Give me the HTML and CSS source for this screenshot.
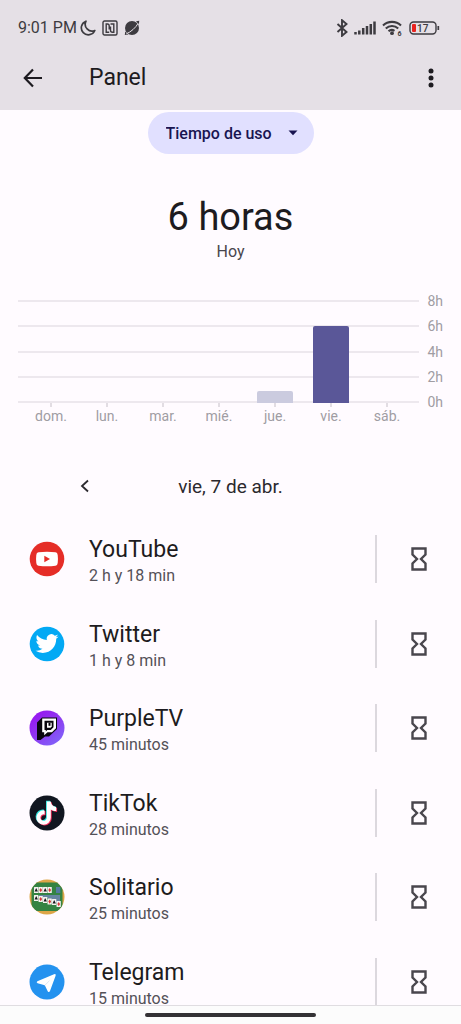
FILE: index.html
```html
<!DOCTYPE html>
<html lang="es">
<head>
<meta charset="utf-8">
<meta name="viewport" content="width=device-width, initial-scale=1">
<title>Panel</title>
<link rel="stylesheet" href="styles.css">
</head>
<body>
<svg class="defs" aria-hidden="true">
  <symbol id="hourglass" viewBox="0 0 16 24">
    <path d="M1.500 1.500h13v6L10 12l4.500 4.500v6h-13v-6L6 12 1.500 7.500z" fill="none" stroke="currentColor" stroke-width="2.400"/>
  </symbol>
</svg>

<header class="top">
  <div class="status">
    <span class="clock">9:01 PM</span>
    <svg class="moon" width="16" height="16" viewBox="0 0 16 16"><path d="M6 1.200A7 7 0 1 0 14.800 10.500 6.800 6.800 0 0 1 6 1.200z" fill="none" stroke="currentColor" stroke-width="1.700" stroke-linejoin="round"/></svg>
    <svg class="nfc" width="16" height="16" viewBox="0 0 16 16"><g fill="none" stroke="currentColor" stroke-width="1.400"><rect x="1" y="1" width="14" height="14" rx="1.500"/><path d="M7.200 12.200H4.200V4h1.300q1.700 0 1.700 2v3.500M8.500 4h3.300v8.200h-1.300q-2 0-2-2V6.500"/></g></svg>
    <svg class="planet" width="16" height="16" viewBox="0 0 16 16"><circle cx="8" cy="8" r="7" fill="currentColor"/><path d="M12 1.200l3.200-.4-.3 3.700zM1.200 11.500L.8 15l3.700-.6z" fill="currentColor"/><path d="M2.300 13.800C6.500 12.300 12 7.500 14 3.500" fill="none" stroke="#e5e0e6" stroke-width="1"/></svg>
    <svg class="bluetooth" width="12" height="18" viewBox="0 0 12 18"><path d="M1.500 5l9 8-4.500 3.800V1.200L10.500 5l-9 8" fill="none" stroke="currentColor" stroke-width="1.900"/></svg>
    <svg class="signal" width="22" height="14" viewBox="0 0 22 14"><path d="M1.500 13.500v-2.500M5.300 13.500V9.500M9.200 13.500V7M13 13.500V5M16.800 13.500V3M20.500 13.500V.5" stroke="currentColor" stroke-width="2.500"/></svg>
    <svg class="wifi" width="21" height="16" viewBox="0 0 21 16"><g fill="none" stroke="currentColor" stroke-width="2.100"><path d="M1 5.500a13 13 0 0 1 18 0M3.800 8.500a9 9 0 0 1 12.400 0M6.500 11.300a5 5 0 0 1 6-.5"/></g><circle cx="10" cy="13.200" r="1.900" fill="currentColor"/><text x="15.500" y="15.500" class="tiny">6</text></svg>
    <svg class="battery" width="31" height="14" viewBox="0 0 31 14"><rect x="1" y="1" width="26" height="12" rx="3.500" fill="none" stroke="currentColor" stroke-width="1.400"/><rect x="3" y="3" width="4" height="8" rx="1" fill="#e9231f"/><path d="M29.300 5v4" stroke="currentColor" stroke-width="1.700"/><text x="8" y="10.700" class="charge">17</text></svg>
  </div>
  <div class="appbar">
    <button class="icon-button" type="button" aria-label="Atrás"><svg width="20" height="20" viewBox="0 0 20 20"><path d="M19 10H2M10 1.500L1.800 10l8.200 8.500" fill="none" stroke="currentColor" stroke-width="2.200"/></svg></button>
    <h1>Panel</h1>
    <button class="icon-button" type="button" aria-label="Más opciones"><svg width="6" height="20" viewBox="0 0 6 20" fill="currentColor"><circle cx="3" cy="3" r="2.500"/><circle cx="3" cy="10" r="2.500"/><circle cx="3" cy="17" r="2.500"/></svg></button>
  </div>
</header>

<main>
  <div class="metric">
    <select aria-label="Métrica"><option>Tiempo de uso</option></select>
    <svg width="10" height="6" viewBox="0 0 10 6"><path d="M.5.500h9L5 5.200z" fill="currentColor"/></svg>
  </div>

  <section class="summary">
    <h2>6 horas</h2>
    <p>Hoy</p>
  </section>

  <section class="chart" aria-label="Uso por día">
    <div class="plot">
      <div class="lines"><i></i><i></i><i></i><i></i><i></i></div>
      <div class="bars">
        <span></span><span></span><span></span><span></span>
        <span><b class="bar" style="height:12%"></b></span>
        <span><b class="bar active" style="height:75%"></b></span>
        <span></span>
      </div>
    </div>
    <div class="scale"><span>8h</span><span>6h</span><span>4h</span><span>2h</span><span>0h</span></div>
    <div class="days"><span>dom.</span><span>lun.</span><span>mar.</span><span>mié.</span><span>jue.</span><span>vie.</span><span>sáb.</span></div>
  </section>

  <nav class="date" aria-label="Día">
    <button class="icon-button" type="button" aria-label="Día anterior"><svg width="10" height="14" viewBox="0 0 10 14"><path d="M8 1.500L2 7l6 5.500" fill="none" stroke="currentColor" stroke-width="1.800"/></svg></button>
    <span>vie, 7 de abr.</span>
  </nav>

  <ul class="apps">
    <li>
      <svg class="logo" viewBox="0 0 36 36"><circle cx="18" cy="18" r="17.300" fill="#e52d27"/><path d="M9.500 11.200Q18 10.200 26.500 11.200 28.500 11.500 28.700 14q.5 4 0 8-.2 2.500-2.200 2.800-8.500 1-17 0-2-.3-2.200-2.800-.5-4 0-8 .2-2.500 2.200-2.800z" fill="#fff"/><path d="M15.300 14.800v6.400l5.700-3.200z" fill="#e52d27"/></svg>
      <div class="info"><h3>YouTube</h3><p>2 h y 18 min</p></div>
      <button class="timer" type="button" aria-label="Temporizador de YouTube"><svg width="16" height="24"><use href="#hourglass"/></svg></button>
    </li>
    <li>
      <svg class="logo" viewBox="0 0 36 36"><circle cx="18" cy="18" r="17.300" fill="#03a9f4"/><g transform="translate(6.500 6) scale(.96)"><path d="M23.950 4.570a10 10 0 0 1-2.820.77 4.960 4.960 0 0 0 2.160-2.720c-.95.55-2 .95-3.130 1.180a4.920 4.920 0 0 0-8.380 4.480C7.690 8.090 4.070 6.130 1.640 3.160a4.820 4.820 0 0 0-.67 2.480c0 1.710.87 3.210 2.190 4.090a4.900 4.900 0 0 1-2.230-.61v.06a4.920 4.920 0 0 0 3.950 4.830 5 5 0 0 1-2.210.08 4.940 4.940 0 0 0 4.600 3.420A9.870 9.870 0 0 1 0 19.540a14 14 0 0 0 7.550 2.210c9.050 0 14-7.500 14-13.980 0-.21 0-.42-.02-.63a9.900 9.900 0 0 0 2.460-2.550z" fill="#fff"/></g></svg>
      <div class="info"><h3>Twitter</h3><p>1 h y 8 min</p></div>
      <button class="timer" type="button" aria-label="Temporizador de Twitter"><svg width="16" height="24"><use href="#hourglass"/></svg></button>
    </li>
    <li>
      <svg class="logo" viewBox="0 0 36 36"><defs><linearGradient id="violet" x1="0" y1="0" x2=".8" y2="1"><stop offset="0" stop-color="#9b0cf2"/><stop offset=".5" stop-color="#8f35ef"/><stop offset="1" stop-color="#8064fa"/></linearGradient></defs><circle cx="18" cy="18" r="17.500" fill="url(#violet)"/><path d="M13 7.500h15V19l-8 7.500h-4L11.500 30H8V12.500z" fill="#08060d"/><path d="M13.200 8.500h13.800v9.800l-4 4h-4.500l-3.300 3v-3h-2z" fill="#fff"/><path d="M15.500 10.800h9v6.500L21.800 20h-3.500l-1.500 1.500V20h-1.300z" fill="#08060d"/><path d="M18 12.800h4.700v3.700l-1.200 1.200H18z" fill="#fff"/><path d="M19.500 12.800h2v3h-2z" fill="#08060d"/></svg>
      <div class="info"><h3>PurpleTV</h3><p>45 minutos</p></div>
      <button class="timer" type="button" aria-label="Temporizador de PurpleTV"><svg width="16" height="24"><use href="#hourglass"/></svg></button>
    </li>
    <li>
      <svg class="logo" viewBox="0 0 36 36"><defs><path id="note" d="M17.800 6.500h4c.3 3.200 2.200 5.200 5.400 5.600v4c-2 0-3.800-.6-5.400-1.700v8.100a7.200 7.200 0 1 1-6.200-7.100v4.100a3.200 3.200 0 1 0 2.200 3z"/></defs><circle cx="18" cy="18" r="17.500" fill="#111620"/><use href="#note" x="-.8" y="-.8" fill="#25e5de"/><use href="#note" x=".9" y=".8" fill="#f52b58"/><use href="#note" fill="#fff"/></svg>
      <div class="info"><h3>TikTok</h3><p>28 minutos</p></div>
      <button class="timer" type="button" aria-label="Temporizador de TikTok"><svg width="16" height="24"><use href="#hourglass"/></svg></button>
    </li>
    <li>
      <svg class="logo" viewBox="0 0 36 36"><defs><clipPath id="disc"><circle cx="18" cy="18" r="17.500"/></clipPath><g id="black-card"><rect width="4.300" height="6" rx=".5" fill="#f5f3ef"/><path d="M2.200 1l1.700 3.400H.5z" fill="#15181b"/></g><g id="red-card"><rect width="4.300" height="6" rx=".5" fill="#f5f3ef"/><path d="M2.200 1l1.400 2-1.400 2.200L.8 3z" fill="#d63838"/></g></defs><g clip-path="url(#disc)"><path fill="#dca547" d="M0 0h36v36H0z"/><path fill="#348342" d="M2.500 3.500h31v28.500h-31z"/><use href="#black-card" x="5" y="8"/><use href="#red-card" x="9.500" y="8"/><use href="#black-card" x="14" y="8"/><use href="#red-card" x="18.500" y="8"/><rect x="27" y="8" width="4.300" height="6" fill="#547ba0"/><path d="M10 16h21v8h-5l-1-3h-5l-1-2h-9z" fill="#6685a0"/><use href="#black-card" x="5" y="16"/><use href="#red-card" x="9.500" y="17"/><use href="#black-card" x="14" y="18"/><use href="#red-card" x="18.500" y="19.500"/><use href="#black-card" x="23" y="20"/><use href="#red-card" x="27.500" y="22"/></g></svg>
      <div class="info"><h3>Solitario</h3><p>25 minutos</p></div>
      <button class="timer" type="button" aria-label="Temporizador de Solitario"><svg width="16" height="24"><use href="#hourglass"/></svg></button>
    </li>
    <li>
      <svg class="logo" viewBox="0 0 36 36"><circle cx="18" cy="18" r="17.500" fill="#2492ef"/><path d="M8.400 17.200L25 10.300q2.300-.8 1.600 1.400L21 27q-1 2-2.300.2L15.800 21.300 8.600 19.200q-1.800-1-.2-2z" fill="#fff"/><path d="M15.800 21.300l4.700-4.600" stroke="#d5e2ef" stroke-width=".8"/></svg>
      <div class="info"><h3>Telegram</h3><p>15 minutos</p></div>
      <button class="timer" type="button" aria-label="Temporizador de Telegram"><svg width="16" height="24"><use href="#hourglass"/></svg></button>
    </li>
  </ul>
</main>
<div class="gesture"><span></span></div>
</body>
</html>
```

FILE: styles.css
```css
* { box-sizing: border-box; }

body {
  margin: 0;
  min-height: 100vh;
  display: flex;
  flex-direction: column;
  background: #fffbff;
  color: #1d1b20;
  font-family: Roboto, "Noto Sans", sans-serif;
}

h1, h2, h3, p, ul { margin: 0; padding: 0; font-weight: 400; }
svg { display: block; flex: none; }
.defs { position: absolute; width: 0; height: 0; }

button, select {
  border: 0;
  padding: 0;
  background: none;
  color: inherit;
  font-family: inherit;
}

.top { background: #e5e0e6; }

.status {
  display: flex;
  align-items: center;
  height: 55px;
  padding: 0 21px 0 18px;
  color: #3d3b40;
}
.clock { width: 62px; font-size: 16px; white-space: nowrap; }
.nfc, .planet { margin-left: 6px; }
.bluetooth { margin-left: auto; }
.signal, .wifi, .battery { margin-left: 6px; }
.tiny { font-size: 7px; font-weight: 700; fill: currentColor; }
.charge { font-size: 10px; font-weight: 500; fill: currentColor; }

.appbar {
  display: flex;
  align-items: center;
  height: 55px;
  padding: 0 18px 10px 13px;
}
.appbar h1 {
  flex: 1;
  padding-left: 36px;
  font-size: 23px;
  line-height: 28px;
}
.icon-button {
  display: grid;
  place-items: center;
  width: 40px;
  height: 40px;
}
.appbar .icon-button:last-child { width: 24px; }

main {
  flex: 1;
  display: flex;
  flex-direction: column;
}

.metric {
  display: grid;
  align-items: center;
  align-self: center;
  width: 166px;
  height: 42px;
  margin-top: 2px;
  border-radius: 21px;
  background: #e1e0ff;
  color: #191551;
}
.metric select, .metric svg { grid-area: 1 / 1; }
.metric select {
  width: 100%;
  height: 100%;
  padding-left: 18px;
  appearance: none;
  font-size: 16px;
  font-weight: 500;
}
.metric svg { justify-self: end; margin-right: 16px; pointer-events: none; }

.summary { padding-top: 39px; text-align: center; }
.summary h2 { font-size: 38px; line-height: 48px; }
.summary p { font-size: 16px; line-height: 22px; color: #49464d; }

.chart {
  display: grid;
  grid-template-columns: 1fr 24px;
  grid-template-rows: 103px 26px;
  padding: 37px 18px 0;
  font-size: 14px;
  color: #a09da3;
}
.plot { display: grid; }
.lines, .bars { grid-area: 1 / 1; }
.lines { display: flex; flex-direction: column; justify-content: space-between; }
.lines i { height: 2px; background: #ede8ee; }
.bars, .days { display: grid; grid-template-columns: repeat(7, 1fr); padding: 0 4px 0 5px; }
.bars span { display: flex; align-items: flex-end; justify-content: center; }
.bar { width: 36px; border-radius: 2px 2px 0 0; background: #cbcbdf; }
.bar.active { background: #5a5798; }
.scale {
  display: flex;
  flex-direction: column;
  justify-content: space-between;
  margin: -7px 0;
  line-height: 16px;
  text-align: right;
}
.days span { text-align: center; line-height: 18px; }
.days span::before {
  content: "";
  display: block;
  width: 2px;
  height: 4px;
  margin: 0 auto;
  background: #e2dde3;
}

.date {
  display: grid;
  grid-template-columns: 40px 1fr 40px;
  align-items: center;
  height: 40px;
  margin-top: 37px;
  padding: 0 65px;
  font-size: 19px;
  text-align: center;
  color: #2b292e;
}

.apps {
  flex: 1;
  display: grid;
  grid-auto-rows: 1fr;
  margin-top: 11px;
  list-style: none;
}
.apps li { display: flex; align-items: center; }
.logo { width: 36px; height: 36px; margin-left: 29px; }
.info { flex: 1; margin-left: 24px; padding-top: 6px; }
.info h3 { font-size: 23px; line-height: 28px; }
.info p { font-size: 16px; line-height: 24px; color: #545158; }
.timer {
  display: grid;
  place-items: center;
  width: 86px;
  height: 48px;
  border-left: 2px solid #dcd8de;
  color: #49464d;
}

.gesture {
  position: fixed;
  inset: auto 0 0;
  display: grid;
  justify-content: center;
  height: 19px;
  padding-top: 7px;
  border-top: 1px solid #e0dde1;
  background: #fcfcfc;
}
.gesture span { width: 171px; height: 4px; border-radius: 2px; background: #343235; }
```
